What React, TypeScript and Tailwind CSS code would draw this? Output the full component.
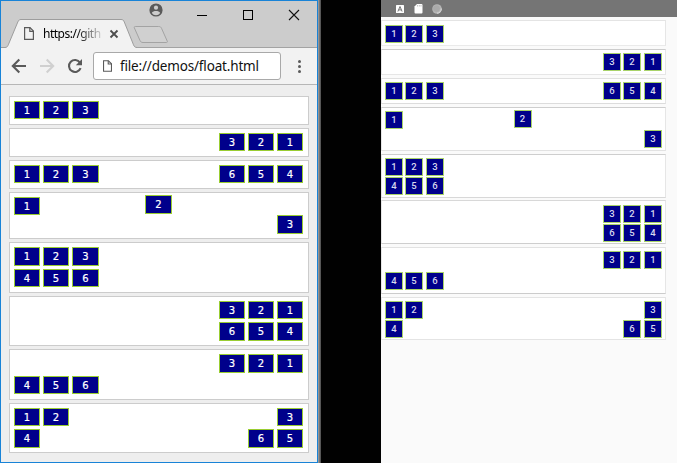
import React from "react";

type Row = { left: number[]; right: number[]; h: string };
type Panel = { h: string; rows: Row[]; spread?: boolean };

const H18 = "h-[18px]";
const H19 = "h-[19px]";

const desktopPanels: Panel[] = [
  { h: "h-[29px]", rows: [{ left: [1, 2, 3], right: [], h: H18 }] },
  { h: "h-[29px]", rows: [{ left: [], right: [3, 2, 1], h: H18 }] },
  { h: "h-[29px]", rows: [{ left: [1, 2, 3], right: [6, 5, 4], h: H18 }] },
  { h: "h-[47px]", rows: [], spread: true },
  { h: "h-[51px]", rows: [{ left: [1, 2, 3], right: [], h: H19 }, { left: [4, 5, 6], right: [], h: H18 }] },
  { h: "h-[50px]", rows: [{ left: [], right: [3, 2, 1], h: H18 }, { left: [], right: [6, 5, 4], h: H19 }] },
  { h: "h-[51px]", rows: [{ left: [], right: [3, 2, 1], h: H19 }, { left: [4, 5, 6], right: [], h: H18 }] },
  { h: "h-[50px]", rows: [{ left: [1, 2], right: [3], h: H18 }, { left: [4], right: [6, 5], h: H19 }] },
];

type PhonePanel = Panel & { mt: string; gap: string; pt: string; edge: string };

const phonePanels: PhonePanel[] = [
  { mt: "mt-[3px]", h: "h-[26px]", pt: "pt-[4px]", gap: "gap-px", edge: "border-t-[#e4e4e4] border-b-[#eaeaea]", rows: desktopPanels[0].rows },
  { mt: "mt-[3px]", h: "h-[26px]", pt: "pt-[3px]", gap: "gap-px", edge: "border-t-[#cccccc] border-b-[#e6e6e6]", rows: desktopPanels[1].rows },
  { mt: "mt-[3px]", h: "h-[26px]", pt: "pt-[3px]", gap: "gap-px", edge: "border-t-[#e0e0e0] border-b-[#dcdcdc]", rows: desktopPanels[2].rows },
  { mt: "mt-[3px]", h: "h-[44px]", pt: "pt-0", gap: "gap-px", edge: "border-t-[#cecece] border-b-[#e2e2e2]", rows: [], spread: true },
  { mt: "mt-[3px]", h: "h-[44px]", pt: "pt-[3px]", gap: "gap-px", edge: "border-t-[#cecece] border-b-[#d8d8d8]", rows: desktopPanels[4].rows },
  { mt: "mt-[2px]", h: "h-[44px]", pt: "pt-[4px]", gap: "gap-px", edge: "border-t-[#d8d8d8] border-b-[#cecece]", rows: desktopPanels[5].rows },
  { mt: "mt-[3px]", h: "h-[47px]", pt: "pt-[3px]", gap: "gap-[3px]", edge: "border-t-[#e2e2e2] border-b-[#cccccc]", rows: desktopPanels[6].rows },
  { mt: "mt-[3px]", h: "h-[43px]", pt: "pt-[3px]", gap: "gap-px", edge: "border-t-[#e4e4e4] border-b-[#e4e4e4]", rows: desktopPanels[7].rows },
];

function Tile({ n, className }: { n: number; className: string }) {
  return (
    <div className={`flex shrink-0 items-center justify-center border border-[#9acd32] bg-[#00008b] pt-px font-['DejaVu_Sans',sans-serif] text-[10px] leading-none text-white ${className}`}>
      <span className="[-webkit-text-stroke:0.2px_white]">{n}</span>
    </div>
  );
}

function PhoneTile({ n, className = "" }: { n: number; className?: string }) {
  return (
    <div className={`flex size-[18px] shrink-0 items-center justify-center border border-[#a9d36a] bg-[#00008b] font-[Roboto,sans-serif] text-[9.5px] leading-none font-medium text-[#d8d8ee] ${className}`}>
      <span>{n}</span>
    </div>
  );
}

function DesktopPanel({ panel }: { panel: Panel }) {
  if (panel.spread) {
    return (
      <div className={`flex items-start justify-between border border-[#cccccc] bg-white pr-[5px] pl-1 ${panel.h}`}>
        <Tile n={1} className="mt-1 h-[18px] w-[26px]" />
        <Tile n={2} className="mt-0.5 h-[19px] w-[27px]" />
        <Tile n={3} className="mt-[22px] h-[19px] w-[26px]" />
      </div>
    );
  }
  return (
    <div className={`flex flex-col gap-[3px] border border-[#cccccc] bg-white pt-1 pr-[5px] pl-1 ${panel.h}`}>
      {panel.rows.map((row, i) => (
        <div key={i} className="flex justify-between">
          <div className="flex gap-[3px]">
            {row.left.map((n, j) => (
              <Tile key={n} n={n} className={`${row.h} ${j === 2 ? "w-[27px]" : "w-[26px]"}`} />
            ))}
          </div>
          <div className="flex gap-[3px]">
            {row.right.map((n) => (
              <Tile key={n} n={n} className={`${row.h} w-[26px]`} />
            ))}
          </div>
        </div>
      ))}
    </div>
  );
}

function PhoneBox({ panel }: { panel: PhonePanel }) {
  const box = `w-[285px] border border-r-[#e6e6e6] border-l-[#e6e6e6] bg-white pr-[3px] pl-[3px] ${panel.edge} ${panel.mt} ${panel.h}`;
  if (panel.spread) {
    return (
      <div className={`flex items-start justify-between ${box}`}>
        <PhoneTile n={1} className="mt-[3px]" />
        <PhoneTile n={2} className="mt-[2px] -ml-[2px]" />
        <PhoneTile n={3} className="mt-[22px]" />
      </div>
    );
  }
  return (
    <div className={`flex flex-col ${box} ${panel.pt} ${panel.gap}`}>
      {panel.rows.map((row, i) => (
        <div key={i} className="flex justify-between">
          <div className="flex">
            {row.left.map((n, j) => (
              <PhoneTile key={n} n={n} className={j === 0 ? "" : j === 1 ? "ml-[2px]" : "ml-[3px]"} />
            ))}
          </div>
          <div className="flex">
            {row.right.map((n, j) => (
              <PhoneTile key={n} n={n} className={j === 0 ? "" : j === 1 && row.right.length === 3 ? "ml-[2px]" : "ml-[3px]"} />
            ))}
          </div>
        </div>
      ))}
    </div>
  );
}

function PageIcon({ className = "" }: { className?: string }) {
  return (
    <svg className={`shrink-0 ${className}`} width="10" height="13" viewBox="0 0 10 13" fill="none" stroke="#5a5a5a" strokeWidth="1.2">
      <path d="M.6 .6H6L9.4 4V12.4H.6Z" />
      <path d="M5.8 .6V4.3H9.4" />
    </svg>
  );
}

function TabStrip() {
  return (
    <div className="relative h-[47px] bg-[#cccccc]">
      <svg className="absolute inset-0" width="316" height="47" viewBox="1 1 316 47" fill="none">
        <path d="M1 47.5H317" stroke="#a3a3a3" />
        <path d="M1 47.5H5C7 47.5 7.6 46.4 8.3 44.8L17.8 22C18.7 20 19.4 19.5 21 19.5H121C122.8 19.5 123.6 20.2 124.3 22L133.5 44.8C134.2 46.5 135 47.5 137 47.5V49H1Z" fill="#f2f2f2" />
        <path d="M1 47.5H5C7 47.5 7.6 46.4 8.3 44.8L17.8 22C18.7 20 19.4 19.5 21 19.5H121C122.8 19.5 123.6 20.2 124.3 22L133.5 44.8C134.2 46.5 135 47.5 137 47.5" stroke="#9d9d9d" />
        <path d="M135.3 26.5H158.5C160.3 26.5 161 27 161.7 28.7L167.2 41C167.7 42 167.3 42.5 166.4 42.5H143C141.3 42.5 140.6 41.8 140 40.5L134.4 28C134 27 134.4 26.5 135.3 26.5Z" fill="#d0d0d0" stroke="#a3a3a3" />
        <circle cx="156" cy="10" r="6.6" fill="#5a5a5a" />
        <circle cx="156" cy="7.7" r="2.1" fill="#ccc" />
        <path d="M151.8 13C152.4 11.5 154.3 11 156 11S159.6 11.5 160.2 13A5 5 0 0 1 151.8 13Z" fill="#ccc" />
        <path d="M197 15.5H207" stroke="#000" />
        <rect x="243.5" y="10.500" width="9" height="9" stroke="#000" />
        <path d="M289 10L299 20M299 10L289 20" stroke="#111" strokeWidth="1.1" />
        <path d="M110.500 30.500L117.500 37.500M117.500 30.500L110.500 37.500" stroke="#4d4d4d" strokeWidth="1.8" />
      </svg>
      <div className="relative flex items-center pt-[26px] pl-[23px]">
        <PageIcon className="-mt-px" />
        <div className="ml-[9px] w-[60px] bg-gradient-to-r from-black from-55% to-black/10 bg-clip-text font-['Noto_Sans',sans-serif] text-[12px] leading-[14px] tracking-[-0.5px] whitespace-nowrap text-transparent">
          https://gith
        </div>
      </div>
    </div>
  );
}

function Toolbar() {
  return (
    <div className="flex h-[37px] items-center border-b border-[#b6b6b6] bg-[#f2f2f2]">
      <svg className="shrink-0" width="92" height="36" viewBox="1 48 92 36" fill="none" strokeWidth="2.1">
        <path d="M26 66H13M19.300 59.500L12.800 66L19.300 72.500" stroke="#5a5a5a" />
        <path d="M40 66H53M46.700 59.500L53.200 66L46.700 72.500" stroke="#d0d0d0" />
        <path d="M80 62.600A6 6 0 1 0 80.600 68.200" stroke="#5a5a5a" />
        <path d="M82 59V65.200H75.800Z" fill="#5a5a5a" />
      </svg>
      <div className="flex h-7 w-[188px] items-center rounded-[3px] border border-[#a9a9a9] bg-white pl-[9px]">
        <PageIcon className="h-3 w-[9px]" />
        <span className="mt-px ml-[8px] font-['Noto_Sans',sans-serif] text-[13.5px] leading-none tracking-[-0.17px] whitespace-nowrap text-[#111]">
          file://demos/float.html
        </span>
      </div>
      <div className="ml-[17px] flex flex-col gap-[2px]">
        <i className="size-[3px] rounded-full bg-[#5a5a5a]" />
        <i className="size-[3px] rounded-full bg-[#5a5a5a]" />
        <i className="size-[3px] rounded-full bg-[#5a5a5a]" />
      </div>
    </div>
  );
}

function StatusBar() {
  return (
    <div className="flex h-[17px] bg-[#757575]">
      <svg width="70" height="17" viewBox="381 0 70 17" fill="none">
        <rect x="396" y="5" width="8" height="8" rx=".5" fill="#fff" />
        <path d="M397.900 11.500L400 6.500L402.100 11.500M398.700 9.900H401.300" stroke="#757575" strokeWidth="1" />
        <path d="M417 4H421.500Q422.500 4 422.500 5V12.500Q422.500 13.500 421.500 13.500H415.500Q414.500 13.500 414.500 12.500V6.500Z" fill="#fff" />
        <path d="M417.500 5V6.500M419.300 5V6.500M421 5V6.500" stroke="#aaa" strokeWidth=".7" />
        <circle cx="437" cy="9" r="4.800" fill="#b5b5b5" />
        <path d="M441.300 8.500A4.400 4.400 0 0 1 437 13.200" stroke="#ddd" strokeWidth="1" />
        <circle cx="436.500" cy="8.600" r="3.300" fill="#aaa" />
      </svg>
    </div>
  );
}

export default function App() {
  return (
    <div className="flex h-[463px] w-[677px] overflow-hidden bg-black">
      <section className="flex w-[318px] shrink-0 flex-col border border-[#1883d7] bg-[#eeeeee]">
        <TabStrip />
        <Toolbar />
        <main className="flex flex-col gap-[3px] pt-[11px] pr-2 pl-2">
          {desktopPanels.map((panel, i) => (
            <DesktopPanel key={i} panel={panel} />
          ))}
        </main>
      </section>
      <div className="w-[3px] shrink-0 bg-gradient-to-r from-[#a5a5a5] to-[#484848]" />
      <div className="w-[60px] shrink-0 bg-[#010101]" />
      <section className="flex w-[296px] shrink-0 flex-col bg-[#fafafa]">
        <StatusBar />
        {phonePanels.map((panel, i) => (
          <PhoneBox key={i} panel={panel} />
        ))}
      </section>
    </div>
  );
}
